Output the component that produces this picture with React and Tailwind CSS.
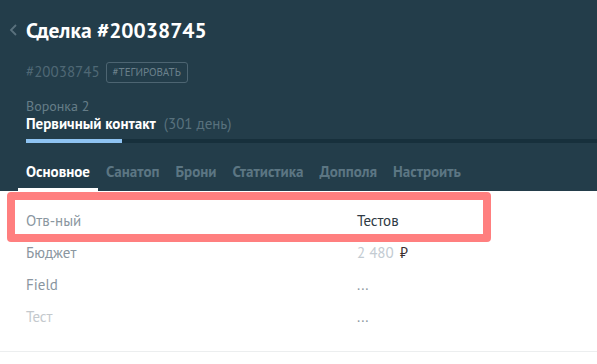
export default function App() {
  const tabs = ["Основное", "Санатоп", "Брони", "Статистика", "Допполя", "Настроить"];
  const rows = [
    { label: "Отв-ный", value: <span className="text-[#2f3a44]">Тестов</span> },
    {
      label: "Бюджет",
      value: (
        <span>
          <span className="text-[#c3cbd2]">2 480</span>
          <span className="ml-[6px] text-[#3a3030]">₽</span>
        </span>
      ),
    },
    { label: "Field", value: <span className="text-[#8c97a1]">...</span> },
    { label: "Тест", value: <span className="text-[#8c97a1]">...</span>, muted: true },
  ];

  return (
    <div
      className="relative w-[597px] h-[364px] overflow-hidden bg-white"
      style={{ fontFamily: '"PT Sans", "Liberation Sans", "Noto Sans", sans-serif' }}
    >
      {/* header */}
      <div className="bg-[#233d4a] pl-[26px] pt-[16px]">
        <div className="flex items-center h-[28px]">
          <svg className="-ml-[19px] mr-[6px]" width="13" height="14" viewBox="0 0 13 14">
            <path d="M9 2 L4 7 L9 12" fill="none" stroke="#5a717d" strokeWidth="1.8" />
          </svg>
          <h1 className="text-[21.5px] leading-[28px] font-bold text-white">Сделка #20038745</h1>
        </div>

        <div className="flex items-center mt-[18px] h-[21px]">
          <span className="text-[15px] text-[#4f6875]">#20038745</span>
          <span className="ml-[6px] h-[21px] px-[6px] flex items-center rounded-[3px] border border-[#4d6572] text-[11px] text-[#6b818c]">
            #ТЕГИРОВАТЬ
          </span>
        </div>

        <div className="mt-[15px] text-[14px] leading-[16px] text-[#667d88]">Воронка 2</div>
        <div className="mt-[2px] text-[15px] leading-[16px]">
          <span className="font-bold text-white">Первичный контакт</span>
          <span className="ml-[8px] text-[#58717d]">(301 день)</span>
        </div>

        <div className="mt-[7px] h-[4px] bg-[#17303c] flex">
          <div className="w-[96px] h-full bg-[#8ec3f2]" />
        </div>

        <div className="flex -ml-[8px]">
          {tabs.map((t, i) => (
            <div key={t} className="flex flex-col px-[8px]">
              <div
                className={`pt-[21px] pb-[8px] leading-[16px] text-[15px] font-bold ${
                  i === 0 ? "text-white" : "text-[#5c7683]"
                }`}
              >
                {t}
              </div>
              <div className={`h-[3px] -mx-[8px] ${i === 0 ? "bg-white" : ""}`} />
            </div>
          ))}
        </div>
      </div>

      {/* fields */}
      <div className="pt-[14px] pb-[18px] border-b border-[#eceeef]">
        {rows.map((r) => (
          <div key={r.label} className="flex h-[32px] items-center text-[15px]">
            <div className={`pl-[26px] w-[357px] ${r.muted ? "text-[#c4c9cd]" : "text-[#8a96a0]"}`}>
              {r.label}
            </div>
            <div>{r.value}</div>
          </div>
        ))}
      </div>

      {/* highlight */}
      <div className="absolute left-[7px] top-[192px] w-[484px] h-[50px] border-[8px] border-[#ff7f7f] rounded-[4px]" />
    </div>
  );
}
